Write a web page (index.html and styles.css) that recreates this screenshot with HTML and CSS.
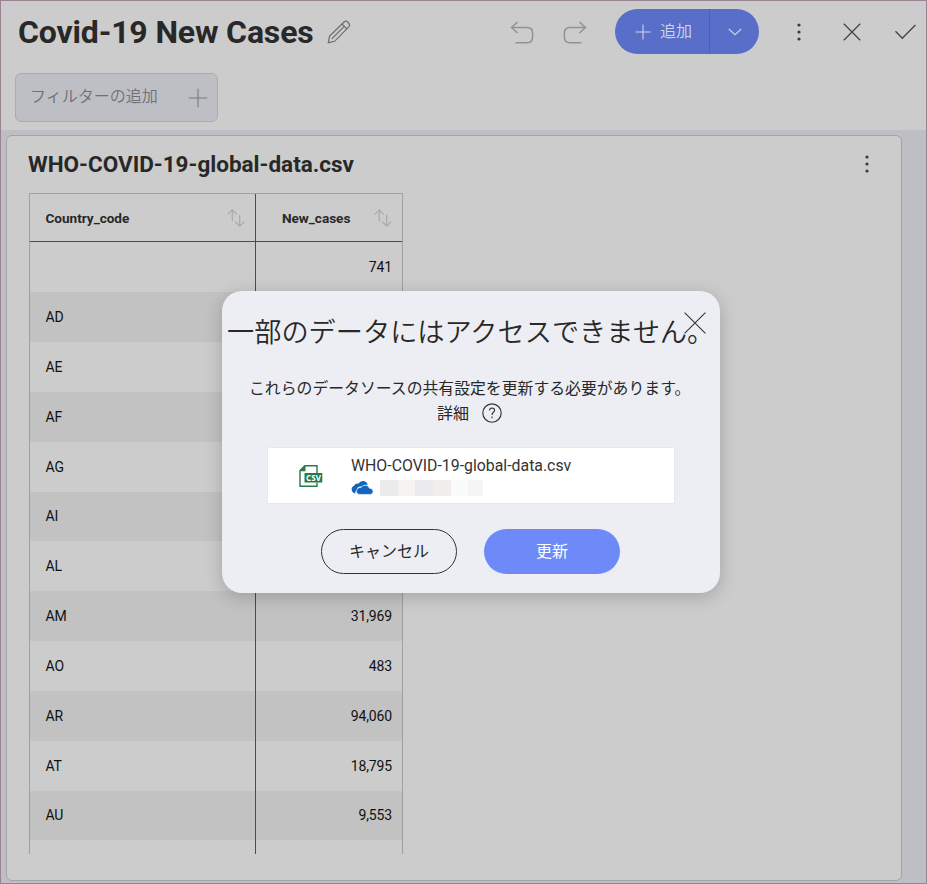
FILE: index.html
```html
<!DOCTYPE html>
<html lang="ja">
<head>
<meta charset="utf-8">
<title>Covid-19 New Cases</title>
<link rel="stylesheet" href="styles.css">
</head>
<body>
<div class="app">
  <header class="topbar">
    <div class="title-row">
      <h1>Covid-19 New Cases</h1>
      <svg class="pencil" width="24" height="24" viewBox="0 0 24 24"><path d="M1.3 22.7 L2.5 16.2 L17.2 1.7 Q18.9.4 20.5 1.9 L22 3.5 Q23.3 5 22 6.6 L7.6 21.3 Z M15 4 L19.7 8.7 M17.2 6.4 L4.8 18.8"/></svg>
      <svg class="undo" width="24" height="24" viewBox="0 0 24 24"><path d="M7.5 1 L1.5 6.5 L7.5 12 M1.5 6.5 H17 Q22.6 6.5 22.6 12 V16 Q22.6 21.7 17 21.7 H5.5"/></svg>
      <svg class="redo" width="24" height="24" viewBox="0 0 24 24"><path d="M16.5 1 L22.5 6.5 L16.5 12 M22.5 6.5 H7 Q1.4 6.5 1.4 12 V16 Q1.4 21.7 7 21.7 H18.5"/></svg>
      <div class="add">
        <div class="add-main"><svg width="16" height="16" viewBox="0 0 16 16"><path d="M8 .5V15.5M.5 8H15.5"/></svg><span>追加</span></div>
        <div class="add-more"><svg width="14" height="8" viewBox="0 0 14 8"><path d="M.8 1 L7 6.7 L13.2 1"/></svg></div>
      </div>
      <svg class="dots top-dots" width="6" height="20" viewBox="0 0 6 20"><circle cx="3" cy="3" r="1.6"/><circle cx="3" cy="10" r="1.6"/><circle cx="3" cy="17" r="1.6"/></svg>
      <svg class="line close" width="18" height="18" viewBox="0 0 18 18"><path d="M.8.8 L17.2 17.2 M17.2.8 L.8 17.2"/></svg>
      <svg class="line check" width="21" height="16" viewBox="0 0 21 16"><path d="M.5 7.2 L7.3 14.2 L20.4 1"/></svg>
    </div>
    <div class="filter"><span>フィルターの追加</span><svg width="20" height="20" viewBox="0 0 20 20"><path d="M10 .8V19.2M.8 10H19.2"/></svg></div>
  </header>
  <main class="board">
    <section class="card">
      <div class="card-head">
        <h2>WHO-COVID-19-global-data.csv</h2>
        <svg class="dots" width="6" height="20" viewBox="0 0 6 20"><circle cx="3" cy="3" r="1.6"/><circle cx="3" cy="10" r="1.6"/><circle cx="3" cy="17" r="1.6"/></svg>
      </div>
      <div class="grid">
        <div class="row head">
          <div class="code"><span>Country_code</span><svg class="sort" width="18" height="18" viewBox="0 0 18 18"><path d="M5.3 12.2V1M.8 5.3 L5.3.8 L9.8 5.3M12.7 6V17M8.2 12.7 L12.7 17.2 L17.2 12.7"/></svg></div>
          <div class="cases"><span>New_cases</span><svg class="sort" width="18" height="18" viewBox="0 0 18 18"><path d="M5.3 12.2V1M.8 5.3 L5.3.8 L9.8 5.3M12.7 6V17M8.2 12.7 L12.7 17.2 L17.2 12.7"/></svg></div>
        </div>
        <div class="row"><div class="code"></div><div class="cases">741</div></div>
        <div class="row"><div class="code">AD</div><div class="cases"></div></div>
        <div class="row"><div class="code">AE</div><div class="cases"></div></div>
        <div class="row"><div class="code">AF</div><div class="cases"></div></div>
        <div class="row"><div class="code">AG</div><div class="cases"></div></div>
        <div class="row"><div class="code">AI</div><div class="cases"></div></div>
        <div class="row"><div class="code">AL</div><div class="cases"></div></div>
        <div class="row"><div class="code">AM</div><div class="cases">31,969</div></div>
        <div class="row"><div class="code">AO</div><div class="cases">483</div></div>
        <div class="row"><div class="code">AR</div><div class="cases">94,060</div></div>
        <div class="row"><div class="code">AT</div><div class="cases">18,795</div></div>
        <div class="row"><div class="code">AU</div><div class="cases">9,553</div></div>
        <div class="row"><div class="code"></div><div class="cases"></div></div>
      </div>
    </section>
  </main>
</div>
<div class="dialog" role="dialog">
  <svg class="dialog-close" width="22" height="22" viewBox="0 0 22 22"><path d="M.6.6 L21.4 21.4 M21.4.6 L.6 21.4"/></svg>
  <h3>一部のデータにはアクセスできません。</h3>
  <p class="message">これらのデータソースの共有設定を更新する必要があります。</p>
  <div class="details"><span>詳細</span><svg width="20" height="20" viewBox="0 0 20 20"><circle cx="10" cy="10" r="9.2"/><path d="M7.4 7.4 Q7.7 5 10.1 5 Q12.6 5.1 12.6 7.3 Q12.6 8.4 11.2 9.5 Q10 10.5 10 12 M10 13.5V15.2"/></svg></div>
  <div class="source">
    <svg class="csv" width="24" height="22" viewBox="0 0 24 22"><path class="sheet" d="M18 8V.8H5.8L1 5.6V21.2H18V17.5M5.8 1V5.6H1"/><path class="solid" d="M1 5.6 L5.8.8V5.6ZM5.5 8H23.3V17.6H5.5Z"/><text x="14.5" y="15.7" text-anchor="middle" textLength="15">CSV</text></svg>
    <div class="source-info">
      <div class="file">WHO-COVID-19-global-data.csv</div>
      <div class="account">
        <svg width="22" height="14" viewBox="0 0 22 14"><path class="cloud" d="M4.2 12.4 A4 4 0 0 1 3 4.8 A4.2 4.2 0 0 1 7.5 2.6 A5 5 0 0 1 16.7 3.8 Q12 3.6 11 5.6 Q6.2 5 5.9 9 Q3.9 10.4 4.2 12.4Z"/><path class="cloud" d="M8 13.4 A3.2 3.2 0 0 1 7.3 7.3 Q8.2 6 10 6.6 A4.7 4.7 0 0 1 18.6 7.4 A3 3 0 0 1 19.5 13.4Z" stroke="#fff" stroke-width=".6"/></svg>
        <div class="masked"><i></i><i></i><i></i><i></i><i></i><i></i></div>
      </div>
    </div>
  </div>
  <div class="actions"><button class="cancel">キャンセル</button><button class="update">更新</button></div>
</div>
</body>
</html>
```
FILE: styles.css
```css
* { box-sizing: border-box; }
body { margin: 0; font-family: Roboto, "Noto Sans CJK JP", sans-serif; color: #282828; }
h1, h2, h3, p { margin: 0; }
svg { display: block; flex: none; fill: none; overflow: visible; }
.app { height: 884px; border: 1px solid #9b8394; background: #bebfc4; display: flex; flex-direction: column; overflow: hidden; }
.topbar { height: 129px; flex: none; background: #ccc; padding: 8px 0 0 14px; }
.title-row { height: 45px; display: flex; align-items: center; }
h1 { width: 312px; padding: 2px 0 0 3px; font-size: 32px; line-height: 45px; font-weight: 700; white-space: nowrap; letter-spacing: -.15px; }
.pencil { stroke: #6c6c6c; stroke-width: 1.2; margin: 1px 0 0; }
.undo, .redo { stroke: #929292; stroke-width: 1.5; margin-top: 3px; }
.undo { margin-left: 159px; }
.redo { margin-left: 29px; }
.add { margin-left: 28px; width: 144px; height: 45px; border-radius: 23px; background: #586ec8; color: #d3d6e3; display: flex; flex: none; }
.add svg { stroke: #d0d4e4; stroke-width: 1.1; }
.add-main { width: 95px; border-right: 1px solid #4a5fb5; display: flex; align-items: center; padding-left: 20px; gap: 9px; font-size: 16px; line-height: 24px; font-weight: 350; }
.add-more { flex: 1; display: flex; align-items: center; padding-left: 18px; }
.dots { fill: #3b3b3b; }
.top-dots { margin-left: 37px; margin-top: 1px; }
.line { stroke: #454545; stroke-width: 1.3; }
.close { margin-left: 41px; margin-top: 1px; }
.check { margin-left: 34px; margin-top: 1px; }
.filter { width: 203px; height: 49px; margin-top: 19px; border: 1px solid #abacb1; border-radius: 6px; background: #bebfc4; color: #6f7074; display: flex; align-items: center; justify-content: space-between; padding: 0 9px 0 14px; font-size: 16px; font-weight: 350; }
.filter span { padding-bottom: 5px; }
.filter svg { stroke: #77787c; stroke-width: 1.1; }
.board { flex: 1; padding: 5px 24px 2px 5px; display: flex; }
.card { flex: 1; background: #ccc; border: 1px solid #a4a4a6; border-radius: 6px; padding: 12px 0 0 22px; }
.card-head { display: flex; justify-content: space-between; align-items: center; height: 33px; padding-right: 31px; }
.card-head .dots { margin-top: -2px; }
h2 { font-size: 22.5px; line-height: 33px; font-weight: 700; margin-left: -1px; }
.grid { width: 374px; height: 661px; margin-top: 12px; border: 1px solid #a0a0a0; border-bottom: 0; overflow: hidden; }
.row { height: 49.83px; display: flex; font-size: 14px; color: #111; letter-spacing: -.15px; }
.row:nth-child(odd) { background: #c2c2c2; }
.row > div { display: flex; align-items: center; }
.row .code { width: 226px; border-right: 1px solid #4c4c4c; padding: 0 10px 0 15.5px; }
.row .cases { width: 146px; justify-content: flex-end; padding-right: 10px; }
.row.head { height: 48.4px; background: #ccc; border-bottom: 1px solid #4c4c4c; font-size: 13.6px; font-weight: 700; color: #282828; letter-spacing: -.03px; }
.head > div { justify-content: space-between !important; }
.head span { padding-top: 1px; }
.head .cases { padding-left: 26px; }
.sort { stroke: #a9a9a9; stroke-width: 1.2; }
.dialog { position: absolute; left: 222px; top: 291px; width: 498px; height: 302px; border-radius: 20px; background: #edeef3; box-shadow: 0 4px 18px rgba(0,0,0,.2); }
.dialog-close { position: absolute; left: 462px; top: 21px; stroke: #333; stroke-width: 1.1; }
h3 { padding: 22px 0 0 5px; font-size: 27.2px; line-height: 40px; font-weight: 350; white-space: nowrap; }
.message { padding: 24px 0 0 27px; font-size: 15.85px; line-height: 24px; white-space: nowrap; font-weight: 400; }
.details { display: flex; align-items: center; height: 22px; margin-left: 215px; gap: 13px; font-size: 16px; font-weight: 400; }
.details svg { stroke: #333; stroke-width: 1.15; margin-top: 2px; }
.source { width: 408px; height: 57px; margin: 24px 0 0 45px; border: 1px solid #e8e8ec; background: #fff; display: flex; align-items: center; }
.csv { margin-left: 31px; }
.csv .sheet { stroke: #247a4c; stroke-width: 1.4; }
.csv .solid { fill: #247a4c; }
.csv text { fill: #fff; font: 700 8px "Open Sans", sans-serif; }
.source-info { margin-left: 28px; }
.file { font-size: 15.85px; line-height: 20px; white-space: nowrap; color: #333; margin-top: 1px; letter-spacing: 0; }
.account { display: flex; align-items: center; height: 17px; margin-top: 4px; gap: 7px; }
.cloud { fill: #1264bd; }
.masked { display: flex; height: 16px; margin-top: -1px; }
.masked i { width: 18px; background: #ebebeb; }
.masked i:nth-child(2) { width: 17px; background: #f7f3f1; }
.masked i:nth-child(3) { background: #ebebee; }
.masked i:nth-child(4) { background: #f1edeb; }
.masked i:nth-child(5) { width: 17px; background: #fafcfb; }
.masked i:nth-child(6) { width: 15px; background: #f5f5f5; }
.actions { display: flex; gap: 27px; padding: 25px 0 0 99px; }
button { width: 136px; height: 45px; border-radius: 23px; padding: 0 0 3px; font: 400 16px Roboto, "Noto Sans CJK JP", sans-serif; }
.cancel { border: 1px solid #333; background: transparent; color: #282828; }
.update { border: 0; background: #6e89f8; color: #fff; }
```
